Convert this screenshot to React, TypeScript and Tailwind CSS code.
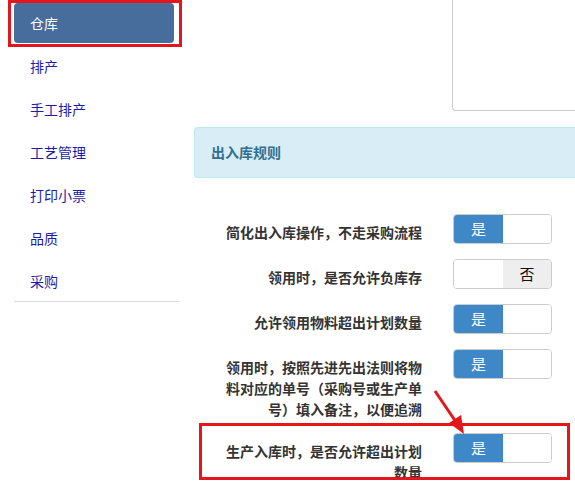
import React from "react";

const navItems = ["仓库", "排产", "手工排产", "工艺管理", "打印小票", "品质", "采购"];

type Row = { label: string; on: boolean; mb: string };

const rows: Row[] = [
  { label: "简化出入库操作，不走采购流程", on: true, mb: "mb-[15px]" },
  { label: "领用时，是否允许负库存", on: false, mb: "mb-[15px]" },
  { label: "允许领用物料超出计划数量", on: true, mb: "mb-[15px]" },
  {
    label: "领用时，按照先进先出法则将物料对应的单号（采购号或生产单号）填入备注，以便追溯",
    on: true,
    mb: "mb-[13px]",
  },
  { label: "生产入库时，是否允许超出计划数量", on: true, mb: "mb-[15px]" },
];

function Toggle({ on }: { on: boolean }) {
  return (
    <div className="flex h-[30px] w-[99px] shrink-0 overflow-hidden rounded-[4px] border border-[#cccccc] bg-white">
      {on ? (
        <>
          <div className="flex w-[49px] items-center justify-center bg-[#3f88c8] text-[15px] text-white">是</div>
          <div className="flex-1 bg-white" />
        </>
      ) : (
        <>
          <div className="w-[49px] bg-white" />
          <div className="flex flex-1 items-center justify-center bg-[#eeeeee] text-[15px] text-[#111]">否</div>
        </>
      )}
    </div>
  );
}

export default function App() {
  return (
    <div
      className="relative h-[484px] w-[575px] overflow-hidden bg-white"
      style={{ fontFamily: '"Noto Sans CJK SC", "Noto Sans", sans-serif' }}
    >
      <div className="flex">
        {/* Sidebar */}
        <div className="w-[194px] shrink-0 pl-[14px] pt-[3px]">
          <div className="flex flex-col gap-[3px]">
            {navItems.map((n, i) => (
              <div
                key={n}
                className={
                  i === 0
                    ? "flex h-10 w-[160px] items-center rounded-[4px] bg-[#476d9c] pl-4 text-[14px] text-white"
                    : "flex h-10 w-[160px] items-center pl-4 text-[14px] text-[#1c1ca8]"
                }
              >
                {n}
              </div>
            ))}
          </div>
          <div className="h-px w-[166px] bg-[#dddddd]" />
        </div>

        {/* Main */}
        <div className="flex-1">
          <div className="ml-[258px] h-[111px] rounded-bl-[4px] border-b border-l border-[#cccccc]" />
          <div className="mt-[16px] flex h-[51px] items-center rounded-l-[4px] border-y border-l border-[#bce8f1] bg-[#d9edf7] pl-4 text-[14px] font-bold text-[#31708f]">
            出入库规则
          </div>
          <div className="mt-[36px] flex flex-col">
            {rows.map((r, i) => (
              <div key={i} className={`flex items-start ${r.mb}`}>
                <div className="ml-[28px] w-[200px] pt-[8px] text-right text-[14px] font-bold leading-[21px] text-[#333333]">
                  {r.label}
                </div>
                <div className="ml-[31px]">
                  <Toggle on={r.on} />
                </div>
              </div>
            ))}
          </div>
        </div>
      </div>

      {/* Annotations */}
      <div className="pointer-events-none absolute left-[8px] top-0 h-[47px] w-[174px] border-[3px] border-[#e3161b]" />
      <div className="pointer-events-none absolute left-[199px] top-[423px] h-[57px] w-[371px] border-[3px] border-[#e3161b]" />
      <svg className="pointer-events-none absolute left-0 top-0" width="575" height="484">
        <line x1="435" y1="391" x2="456" y2="422" stroke="#e3161b" strokeWidth="3" />
        <polygon points="464,434 449,423 461,415" fill="#e3161b" />
      </svg>
    </div>
  );
}
